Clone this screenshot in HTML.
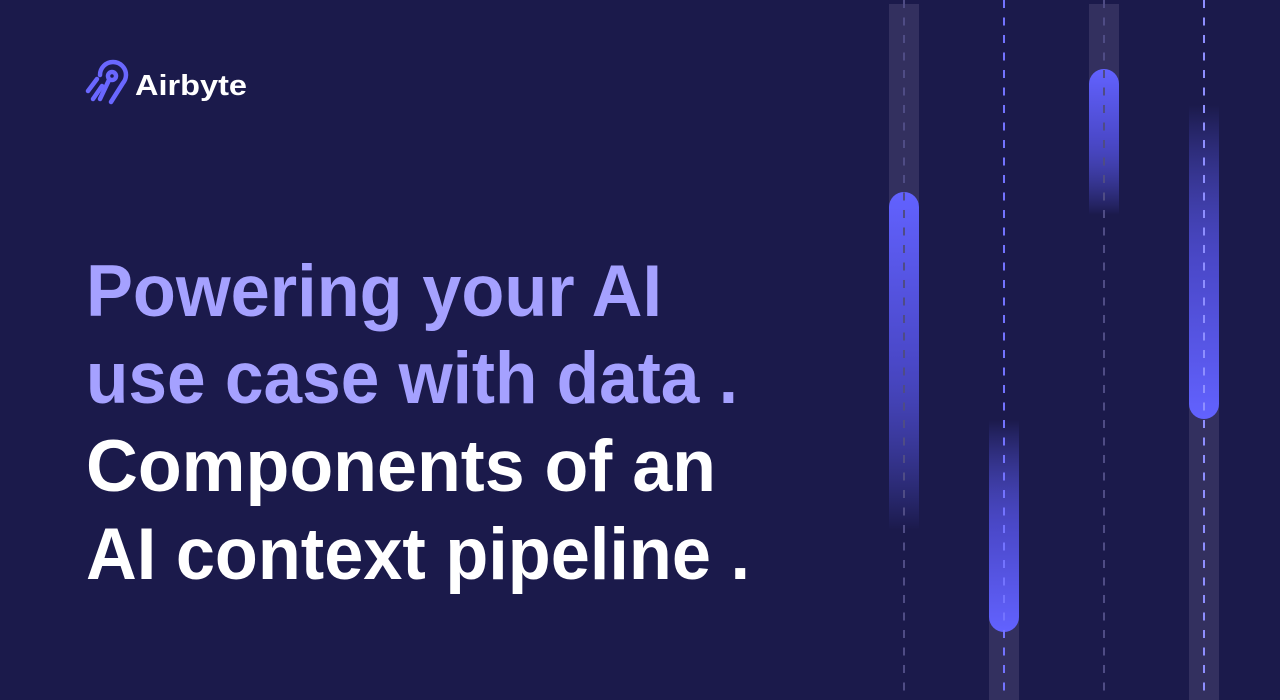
<!DOCTYPE html>
<html><head><meta charset="utf-8"><style>
html,body{margin:0;padding:0;background:#1b1a4b;width:1280px;height:700px;overflow:hidden}
svg{display:block}
</style></head><body>
<svg width="1280" height="700" viewBox="0 0 1280 700" xmlns="http://www.w3.org/2000/svg">
<defs>
<linearGradient id="gdown" x1="0" y1="0" x2="0" y2="1">
<stop offset="0" stop-color="#6262ff"/><stop offset="0.5" stop-color="#4a48c8"/><stop offset="1" stop-color="#6262ff" stop-opacity="0"/>
</linearGradient>
<linearGradient id="gup" x1="0" y1="1" x2="0" y2="0">
<stop offset="0" stop-color="#6262ff"/><stop offset="0.5" stop-color="#4a48c8"/><stop offset="1" stop-color="#6262ff" stop-opacity="0"/>
</linearGradient>
</defs>
<rect width="1280" height="700" fill="#1b1a4b"/>
<rect x="889" y="4" width="30" height="200" fill="#33305f"/>
<path d="M889 207a15 15 0 0 1 30 0V530H889Z" fill="url(#gdown)"/>
<line x1="904" y1="0" x2="904" y2="700" stroke="#4f4c85" stroke-width="2" stroke-dasharray="8 9.5"/>
<rect x="989" y="610" width="30" height="90" fill="#33305f"/>
<path d="M989 420H1019V617a15 15 0 0 1 -30 0Z" fill="url(#gup)"/>
<line x1="1004" y1="0" x2="1004" y2="700" stroke="#7373ff" stroke-width="2" stroke-dasharray="8 9.5"/>
<rect x="1089" y="4" width="30" height="80" fill="#33305f"/>
<path d="M1089 84a15 15 0 0 1 30 0V215H1089Z" fill="url(#gdown)"/>
<line x1="1104" y1="0" x2="1104" y2="700" stroke="#4f4c85" stroke-width="2" stroke-dasharray="8 9.5"/>
<rect x="1189" y="400" width="30" height="300" fill="#33305f"/>
<path d="M1189 105H1219V404a15 15 0 0 1 -30 0Z" fill="url(#gup)"/>
<line x1="1204" y1="0" x2="1204" y2="700" stroke="#8e8eff" stroke-width="2" stroke-dasharray="8 9.5"/>

<g fill="none" stroke="#6a67ff" stroke-width="4.5" stroke-linecap="round" stroke-linejoin="round">
<path d="M100 75 A13 13 0 0 1 126 75 A13 13 0 0 1 123 83 L111 102"/>
<circle cx="112" cy="76" r="4"/>
<path d="M109 80 L100 99"/>
<path d="M88 91 L97 79"/>
<path d="M93 99 L102 86"/>
</g>
<text x="135" y="95" font-family="Liberation Sans, sans-serif" font-weight="bold" font-size="29" fill="#ffffff" textLength="112" lengthAdjust="spacingAndGlyphs">Airbyte</text>

<g font-family="Liberation Sans, sans-serif" font-weight="bold" font-size="73">
<text x="86" y="316" fill="#a5a1ff" textLength="576" lengthAdjust="spacingAndGlyphs">Powering your AI</text>
<text x="86" y="403" fill="#a5a1ff" textLength="652" lengthAdjust="spacingAndGlyphs">use case with data .</text>
<text x="86" y="491" fill="#ffffff" textLength="630" lengthAdjust="spacingAndGlyphs">Components of an</text>
<text x="86" y="579" fill="#ffffff" textLength="664" lengthAdjust="spacingAndGlyphs">AI context pipeline .</text>
</g>
</svg>
</body></html>
